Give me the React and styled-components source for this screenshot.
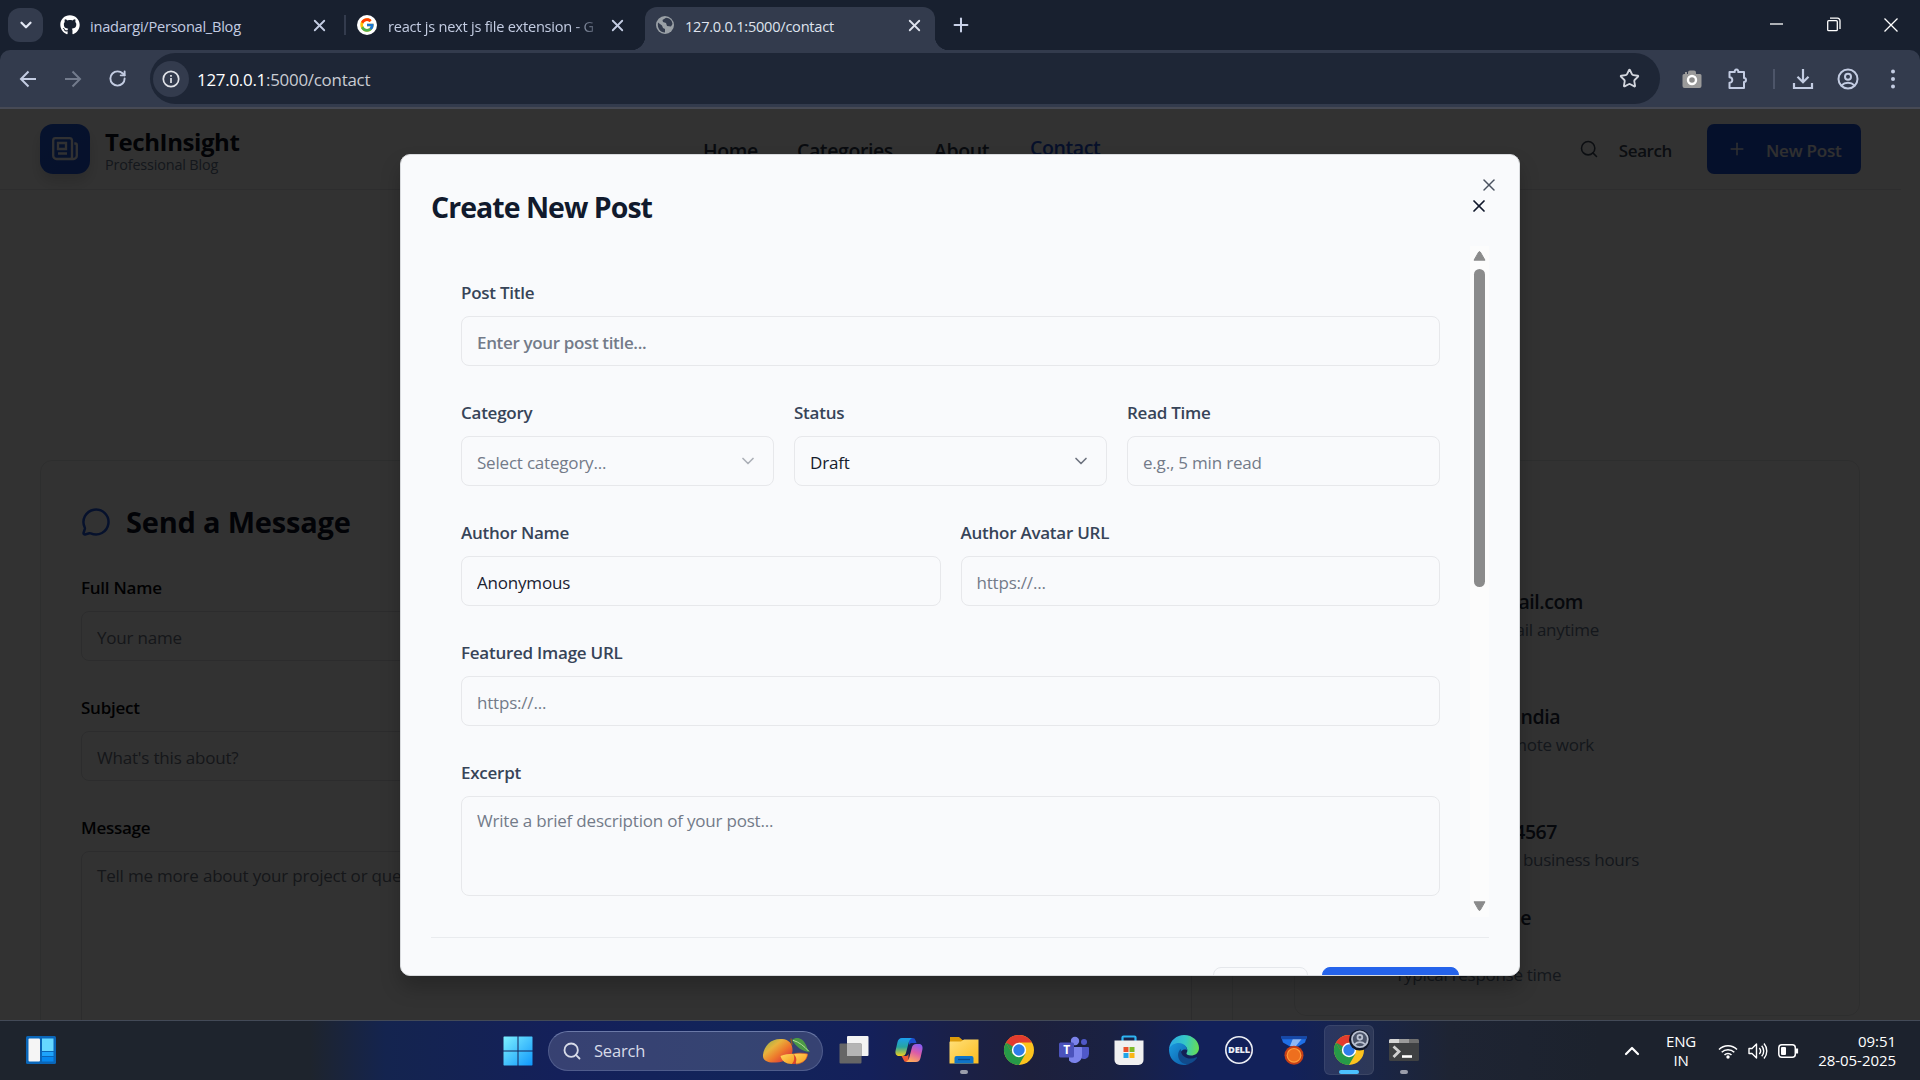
import React from "react";
import styled, { createGlobalStyle, css } from "styled-components";
import { X, Plus, Search, ChevronDown, ChevronUp, MessageCircle, RotateCw, Star } from "lucide-react";
import { FaGithub } from "react-icons/fa";
import { FcGoogle } from "react-icons/fc";

const Global = createGlobalStyle`
  * { box-sizing: border-box; }
  body { margin: 0; overflow: hidden; background: #323232; }
  svg { display: block; flex: none; }
  input, textarea, button { font: inherit; letter-spacing: inherit; margin: 0; }
`;

const Screen = styled.div`
  width: 1920px;
  height: 1080px;
  display: flex;
  flex-direction: column;
  overflow: hidden;
  font-family: "Open Sans", "Noto Sans", sans-serif;
  font-stretch: 91%;
  letter-spacing: -0.2px;
  white-space: nowrap;
`;

/* ---------- browser chrome ---------- */

const TabStrip = styled.div`
  height: 50px;
  flex: none;
  display: flex;
  align-items: center;
  background: #18202f;
  padding-left: 8px;
`;

const TabSearch = styled.div`
  width: 35px;
  height: 34px;
  border-radius: 12px;
  background: #333b4d;
  display: flex;
  align-items: center;
  justify-content: center;
  color: #e3e8f4;
`;

const Tab = styled.div`
  position: relative;
  width: ${(p) => p.$w}px;
  height: ${(p) => (p.$active ? 43 : 34)}px;
  align-self: ${(p) => (p.$active ? "flex-end" : "center")};
  padding: 0 ${(p) => p.$right}px ${(p) => (p.$active ? 7 : 0)}px ${(p) => p.$left}px;
  display: flex;
  align-items: center;
  color: #c3cce2;
  ${(p) =>
    p.$active &&
    css`
      color: #dfe3ee;
      background: #333b4d;
      border-radius: 12px 12px 0 0;
      &::before,
      &::after {
        content: "";
        position: absolute;
        bottom: 0;
        width: 14px;
        height: 14px;
      }
      &::before {
        left: -14px;
        background: radial-gradient(circle at 0 0, transparent 14px, #333b4d 14.5px);
      }
      &::after {
        right: -14px;
        background: radial-gradient(circle at 100% 0, transparent 14px, #333b4d 14.5px);
      }
    `}
`;

const TabTitle = styled.span`
  flex: 1;
  min-width: 0;
  overflow: hidden;
  margin-left: ${(p) => p.$gap || 11}px;
  padding-top: 1px;
  font-size: 14.6px;
  line-height: 24px;
  letter-spacing: -0.25px;
  ${(p) => p.$fade && "mask-image: linear-gradient(90deg, #000 84%, transparent 98%);"}
`;

const TabRule = styled.div`
  width: 2px;
  height: 20px;
  background: #333b4d;
`;

const NewTab = styled.div`
  margin-left: 15px;
  color: #c9d2e8;
`;

const WindowButtons = styled.div`
  margin-left: auto;
  padding-right: 22px;
  display: flex;
  align-items: center;
  gap: 43px;
`;

const Toolbar = styled.div`
  height: 59px;
  flex: none;
  display: flex;
  align-items: center;
  background: #333b4d;
  border-bottom: 2px solid #474a55;
  border-radius: 10px 10px 0 0;
  color: #c3cce2;
`;

const ToolbarWrap = styled.div`
  flex: none;
  background: #18202f;
`;

const NavIcons = styled.div`
  width: 150px;
  flex: none;
  display: flex;
  align-items: center;
  gap: 25px;
  padding-left: 18px;
`;

const Omnibox = styled.div`
  width: 1510px;
  flex: none;
  height: 51px;
  border-radius: 26px;
  background: #1e2636;
  display: flex;
  align-items: center;
  padding: 0 20px 0 7px;
  color: #d3d6de;
`;

const InfoBadge = styled.div`
  width: 36px;
  height: 36px;
  margin-left: -4px;
  border-radius: 50%;
  background: #333b4d;
  display: flex;
  align-items: center;
  justify-content: center;
`;

const Address = styled.span`
  flex: 1;
  margin-left: 8px;
  padding-top: 1px;
  font-size: 16.9px;
  color: #c9ccd3;
  letter-spacing: -0.25px;
  b { font-weight: 400; color: #fff; }
`;

const ToolbarActions = styled.div`
  flex: 1;
  display: flex;
  align-items: center;
  padding-left: 21px;
`;

const ActionSlot = styled.div`
  width: ${(p) => p.$w}px;
  display: flex;
  justify-content: center;
`;

const ToolbarRule = styled.div`
  width: 2px;
  height: 20px;
  background: #4d5569;
`;

/* ---------- page behind the dialog ---------- */

const Page = styled.div`
  position: relative;
  height: 911px;
  flex: none;
  overflow: hidden;
  background: #fafafa;
  color: #0f172a;
`;

const Header = styled.header`
  width: 1901px;
  height: 81px;
  border-bottom: 1px solid #dfe1e5;
  display: flex;
  align-items: center;
  padding: 0 40px;
`;

const Logo = styled.div`
  width: 50px;
  height: 50px;
  border-radius: 13px;
  background: linear-gradient(135deg, #1f5ae0, #2257d8);
  box-shadow: 0 8px 14px rgba(0, 0, 0, 0.14);
  display: flex;
  align-items: center;
  justify-content: center;
  margin-top: -1px;
`;

const Brand = styled.div`
  margin-left: 15px;
  width: 590px;
  padding-top: 5px;
`;

const BrandName = styled.div`
  font-size: 24px;
  font-weight: 700;
  line-height: 26px;
  letter-spacing: -0.4px;
  color: #0b1020;
`;

const BrandTag = styled.div`
  font-size: 14.4px;
  line-height: 19px;
  letter-spacing: -0.15px;
  color: #64748b;
`;

const Nav = styled.nav`
  display: flex;
  flex: 1;
  margin-left: 8px;
  gap: 40px;
  font-size: 19.5px;
  font-weight: 600;
  line-height: 28px;
  letter-spacing: -0.4px;
  color: #2f3a4d;
`;

const NavLink = styled.a`
  width: ${(p) => p.$w}px;
  padding-top: ${(p) => (p.$current ? 0 : 3)}px;
  ${(p) => p.$current && "color: #1e4fd0;"}
`;

const HeaderSearch = styled.div`
  display: flex;
  align-items: center;
  gap: 20px;
  font-size: 17px;
  font-weight: 600;
  letter-spacing: -0.4px;
  margin-right: 35px;
  color: #3b4557;
  span { padding-top: 2px; }
`;

const NewPost = styled.div`
  width: 154px;
  height: 50px;
  margin-top: -1px;
  border-radius: 7px;
  background: #1d4fd7;
  color: #f1f1f1;
  display: flex;
  align-items: center;
  padding-left: 20px;
  gap: 19px;
  font-size: 17px;
  font-weight: 600;
  span { padding-top: 3px; }
`;

const Columns = styled.div`
  display: flex;
  align-items: flex-start;
  gap: 61px;
  padding: 270px 0 0 40px;
`;

const Card = styled.section`
  width: ${(p) => p.$w}px;
  height: ${(p) => p.$h}px;
  border: 1px solid #e2e3e6;
  border-radius: 12px;
  padding: ${(p) => p.$pad};
`;

const CardTitle = styled.h2`
  margin: 0 0 29px;
  display: flex;
  align-items: center;
  gap: 15px;
  font-size: 29px;
  line-height: 40px;
  font-weight: 700;
  letter-spacing: -0.2px;
  color: #0b1224;
  svg { color: #2157dc; }
`;

const Field = styled.div`
  display: flex;
  flex-direction: column;
  margin-bottom: ${(p) => (p.$dim ? 30 : 0)}px;
`;

const Label = styled.label`
  height: 40px;
  line-height: 33px;
  font-size: 17px;
  font-weight: 600;
  letter-spacing: -0.25px;
  color: ${(p) => (p.$dim ? "#05070c" : "#374458")};
`;

const boxed = css`
  border: 1.5px solid ${(p) => (p.$dim ? "#dadce0" : "#e7e8eb")};
  border-radius: 8px;
  padding: 0 15px;
  font-size: 17px;
  background: transparent;
  outline: none;
  resize: none;
  color: #1b2232;
  &::placeholder { color: ${(p) => (p.$dim ? "#6b7280" : "#737b89")}; opacity: 1; }
`;

const Input = styled.input`
  ${boxed}
  width: 100%;
  height: 50px;
  padding-top: 3px;
  font-weight: ${(p) => (p.$medium ? 600 : 400)};
  letter-spacing: ${(p) => (p.$medium ? -0.35 : -0.2)}px;
`;

const TextArea = styled.textarea`
  ${boxed}
  width: 100%;
  height: ${(p) => p.$h}px;
  padding-top: 11px;
  line-height: 25px;
`;

const Contact = styled.div`
  width: ${(p) => p.$w}px;
  margin-bottom: ${(p) => p.$gap}px;
  text-align: ${(p) => (p.$left ? "left" : "right")};
`;

const ContactMain = styled.div`
  font-size: 19.5px;
  line-height: 28px;
  font-weight: 600;
  letter-spacing: -0.45px;
  color: #222b3d;
  margin-right: ${(p) => p.$inset}px;
`;

const ContactSub = styled.div`
  font-size: 17px;
  line-height: 28px;
  letter-spacing: -0.28px;
  color: #64748b;
`;

const Overlay = styled.div`
  position: absolute;
  inset: 0;
  background: rgba(0, 0, 0, 0.8);
  display: flex;
  justify-content: center;
  align-items: flex-start;
  padding-top: 45px;
`;

/* ---------- dialog ---------- */

const Dialog = styled.div`
  position: relative;
  width: 1120px;
  height: 822px;
  overflow: hidden;
  border: 1px solid #d9dbde;
  border-radius: 10px;
  background: #f9fafc;
  box-shadow: 0 12px 20px rgba(0, 0, 0, 0.22);
  padding: 30px;
`;

const DialogTitle = styled.h2`
  margin: 0;
  height: 61px;
  font-size: 28.5px;
  line-height: 45px;
  font-weight: 700;
  color: #111a2d;
  letter-spacing: -0.98px;
  display: flex;
  justify-content: space-between;
  svg { margin-top: 11px; color: #10182b; }
`;

const DialogClose = styled.div`
  position: absolute;
  top: 20px;
  right: 20px;
  color: #4b5360;
`;

const ScrollArea = styled.div`
  display: flex;
  height: 671px;
`;

const Form = styled.div`
  flex: 1;
  padding: 30px 30px 0;
  display: flex;
  flex-direction: column;
  gap: 30px;
`;

const Row = styled.div`
  display: grid;
  grid-template-columns: repeat(${(p) => p.$n}, 1fr);
  gap: 20px;
`;

const SelectBox = styled.div`
  ${boxed}
  height: 50px;
  padding: 3px 15px 0 15px;
  display: flex;
  align-items: center;
  justify-content: space-between;
  color: ${(p) => (p.$empty ? "#737b89" : "#161d2d")};
  svg { color: #6d737f; margin-top: -3px; opacity: ${(p) => (p.$empty ? 0.55 : 1)}; }
`;

const ScrollTrack = styled.div`
  width: 19px;
  background: #fcfcfc;
  display: flex;
  flex-direction: column;
  align-items: center;
  padding: 5px 0 6px;
`;

const ScrollThumb = styled.div`
  width: 11px;
  height: 318px;
  margin: 8px 0 auto;
  border-radius: 6px;
  background: #8b8b8b;
`;

const DialogFooter = styled.div`
  margin-top: 20px;
  border-top: 1.5px solid #e9ebee;
  padding: 29px 30px 0 0;
  display: flex;
  justify-content: flex-end;
  gap: 14px;
`;

const FooterButton = styled.div`
  width: ${(p) => p.$w}px;
  height: 50px;
  border-radius: 8px;
  border: 1.5px solid ${(p) => (p.$primary ? "#2563eb" : "#e5e7eb")};
  background: ${(p) => (p.$primary ? "#2563eb" : "transparent")};
`;

/* ---------- taskbar ---------- */

const Taskbar = styled.footer`
  flex: 1;
  border-top: 1px solid #434a57;
  display: flex;
  align-items: center;
  background: linear-gradient(90deg, #1e242d 0, #1e242d 310px, #14244f 385px, #14205a 560px, #12245a 740px, #14205a 870px, #1b2045 970px, #1d203c 1030px, #1a2142 1110px, #12215a 1200px, #12215a 1290px, #192548 1370px, #1e2433 1450px, #1c222d 1600px, #1c222d 100%);
  color: #fff;
`;

const StartZone = styled.div`
  width: 503px;
  padding: 0 0 1px 26px;
`;

const SearchPill = styled.div`
  width: 275px;
  height: 40px;
  margin-left: 15px;
  margin-right: 3px;
  border-radius: 20px;
  border: 1px solid rgba(150, 165, 210, 0.28);
  border-top-color: rgba(160, 175, 220, 0.5);
  background: rgba(255, 255, 255, 0.15);
  display: flex;
  align-items: center;
  padding: 0 12px 0 13px;
  font-size: 16.5px;
  color: #d7dbe8;
  span { flex: 1; margin-left: 12px; }
`;

const AppSlot = styled.div`
  width: 55px;
  height: 59px;
  display: flex;
  flex-direction: column;
  align-items: center;
  padding-top: 4px;
`;

const AppTile = styled.div`
  width: 50px;
  height: 50px;
  border-radius: 6px;
  display: flex;
  flex-direction: column;
  align-items: center;
  padding-top: 10px;
  ${(p) => p.$active && "background: rgba(255,255,255,0.09); border: 1px solid rgba(255,255,255,0.07); padding-top: 9px;"}
`;

const RunMark = styled.div`
  width: ${(p) => (p.$active ? 20 : 8)}px;
  height: 4px;
  margin-top: 5px;
  border-radius: 2px;
  background: ${(p) => (p.$active ? "#4cc2ff" : "#9a9dab")};
`;

const Tray = styled.div`
  flex: 1;
  display: flex;
  align-items: center;
  justify-content: flex-end;
  padding-right: 24px;
  font-size: 15px;
  line-height: 20px;
`;

const Language = styled.div`
  text-align: center;
  width: 40px;
  margin: 0 17px 0 17px;
  line-height: 19px;
`;

const StatusIcons = styled.div`
  display: flex;
  align-items: center;
  gap: 10px;
  margin-right: 19px;
`;

const Clock = styled.div`
  width: 78px;
  display: flex;
  flex-direction: column;
  align-items: flex-end;
  letter-spacing: -0.05px;
  line-height: 19px;
`;

/* ---------- drawings ---------- */

const Arrow = ({ dim, flip }) => (
  <svg width="20" height="20" viewBox="0 0 20 20" fill="none" stroke={dim ? "#737b8c" : "#c3cce2"} strokeWidth="2">
    <g transform={flip ? "translate(20 0) scale(-1 1)" : undefined}>
      <path d="M18 10H3M10.5 2.5 3 10l7.500 7.500" />
    </g>
  </svg>
);

const Globe = () => (
  <svg width="18" height="20" viewBox="0 0 18 18">
    <circle cx="9" cy="9" r="9" fill="#9aa0a6" />
    <path d="M2 6.500 6 9.500 7 12l2 1v3.500C4 16.500 1 12 2 6.500ZM10 1.800 6.500 4 7 6l3 1 1 3 4 .5L16.500 8C16 4 13.500 2 10 1.800Z" fill="#333b4d" />
  </svg>
);

const WinGlyph = ({ kind }) => (
  <svg width="14" height="16" viewBox="0 0 14 16" fill="none" stroke="#fff" strokeWidth="1.3">
    {kind === "min" && <path d="M0 7h13" />}
    {kind === "restore" && (
      <>
        <rect x=".7" y="3.700" width="9.600" height="10" rx="1" />
        <path d="M3 1.200h7.500a2.500 2.500 0 0 1 2.500 2.500V12" />
      </>
    )}
    {kind === "close" && <path d="m.5 1.500 13 13M13.500 1.500l-13 13" />}
  </svg>
);

const Camera = () => (
  <svg width="20" height="20" viewBox="0 0 20 20">
    <path d="M2 5h4V3.500A2 2 0 0 1 8 1.500h4a2 2 0 0 1 2 2V5h4a1.500 1.500 0 0 1 1.500 1.500V17a2 2 0 0 1-2 2H2.500a2 2 0 0 1-2-2V6.500A1.500 1.500 0 0 1 2 5Z" fill="#9a9a9a" />
    <path d="M3 3h2v2H3z" fill="#9a9a9a" />
    <circle cx="10" cy="11" r="4" fill="#8b8b8b" stroke="#fff" strokeWidth="2.400" />
  </svg>
);

const Puzzle = () => (
  <svg width="22" height="22" viewBox="0 0 22 22" fill="none" stroke="#c3cce2" strokeWidth="2">
    <path d="M2.500 4h5.300a1.800 1.800 0 1 1 3.400 0H17v6a2 2 0 1 1 0 4v6H2.500v-5.200a2.800 2.800 0 0 0 0-5.600Z" strokeLinejoin="round" />
  </svg>
);

const Download = () => (
  <svg width="22" height="22" viewBox="0 0 22 22" fill="none" stroke="#c3cce2" strokeWidth="2.200">
    <path d="M11 1v13M5.500 8.700 11 14.200l5.500-5.500M2 15v5h18v-5" />
  </svg>
);

const Profile = () => (
  <svg width="22" height="22" viewBox="0 0 22 22" fill="none" stroke="#c3cce2" strokeWidth="2">
    <circle cx="11" cy="11" r="9.500" />
    <circle cx="11" cy="8.700" r="3" />
    <path d="M4.500 17.500c3.500-3.600 9.500-3.600 13 0" />
  </svg>
);

const Dots = () => (
  <svg width="6" height="20" viewBox="0 0 6 20" fill="#c3cce2">
    <circle cx="3" cy="2.500" r="2" />
    <circle cx="3" cy="10" r="2" />
    <circle cx="3" cy="17.500" r="2" />
  </svg>
);

const Info = () => (
  <svg width="18" height="18" viewBox="0 0 18 18" fill="none" stroke="#e1e3e8" strokeWidth="1.700">
    <circle cx="9" cy="9" r="7.700" />
    <path d="M9 8v5M9 5v1.800" />
  </svg>
);

const PaperLogo = () => (
  <svg width="26" height="24" viewBox="0 0 26 24" fill="none" stroke="#f4f5f8" strokeWidth="2.300">
    <path d="M17.500 1.200H3.500A2.300 2.300 0 0 0 1.200 3.500v15.200A3.300 3.300 0 0 0 4.500 22h17a3.300 3.300 0 0 0 3.300-3.300V8a1.500 1.500 0 0 0-1.500-1.500h-1M20 22a2 2 0 0 1 0-2V3.500A2.500 2.500 0 0 0 17.500 1.200" />
    <path d="M6 6h8v6H6zM6 16.500h9" />
  </svg>
);

const Triangle = ({ down }) => (
  <svg width="13" height="10" viewBox="0 0 13 10">
    <path d={down ? "M1 .8h11L7.300 9q-.8 1-1.600 0Z" : "M1 9.200h11L7.300 1q-.8-1-1.600 0Z"} fill="#8b8b8b" stroke="#8b8b8b" strokeWidth="1" strokeLinejoin="round" />
  </svg>
);

const Widgets = () => (
  <svg width="30" height="28" viewBox="0 0 30 28">
    <rect width="30" height="28" rx="1.500" fill="#0a66b8" />
    <rect x="2.500" y="2.500" width="11.500" height="23" rx="1" fill="#f5f5f5" />
    <rect x="16" y="2.500" width="11.500" height="12.500" fill="#66d8ff" />
    <rect x="16" y="16" width="11.500" height="4" fill="#1ea4fb" />
    <rect x="16" y="21" width="11.500" height="4.500" fill="#0788ee" />
  </svg>
);

const WindowsLogo = () => (
  <svg width="30" height="30" viewBox="0 0 30 30">
    <defs>
      <linearGradient id="win" x1="0" y1="0" x2="1" y2="1">
        <stop stopColor="#7df0ff" />
        <stop offset="1" stopColor="#0f97fb" />
      </linearGradient>
    </defs>
    <path fill="url(#win)" d="M1 .5h13.500V14.500H.5V1ZM15.500.5H29l.5.5v13.500h-14ZM.5 15.500h14v14H1l-.5-.5ZM15.500 15.500h14V29l-.5.5H15.500Z" />
  </svg>
);

const Mango = () => (
  <svg width="48" height="28" viewBox="0 0 48 28">
    <defs>
      <linearGradient id="mango" x1=".1" y1=".1" x2=".9" y2=".9">
        <stop stopColor="#9fb04c" />
        <stop offset=".3" stopColor="#e8b33c" />
        <stop offset=".6" stopColor="#ee7a2c" />
        <stop offset="1" stopColor="#d8303a" />
      </linearGradient>
      <linearGradient id="slice" x1="0" y1="0" x2="1" y2="1">
        <stop stopColor="#ffd95e" />
        <stop offset="1" stopColor="#f79a1e" />
      </linearGradient>
    </defs>
    <path d="M1 18C2 8 10 1 20 2c7 .5 11 5 10.500 12S23 25 14 25.500C6 26 .5 24 1 18Z" fill="url(#mango)" />
    <path d="M29 1.500 30 8" stroke="#8a5a2a" strokeWidth="1.500" />
    <path d="M30 3c5-4 11-1.500 14 5 1 3 2 5 4 7-7 0-14-5-18-12Z" fill="#4c9a46" />
    <path d="M31 3.300C37 5 42 9 46.500 14" stroke="#b7dc9e" fill="none" />
    <path d="M30 17.500c5-2 11-1.500 15.500-.5-.5 6-5 9.500-11.500 10Z" fill="url(#slice)" stroke="#e0602a" strokeWidth=".7" />
    <path d="M18.500 19c4-1.800 8-2 13-2.200 1 5 1 7 0 10C25 27.500 20 25 18.500 19Z" fill="url(#slice)" />
    <path d="M31.500 17c3 3 4 6 1.500 10h-3c2.500-3 2.700-6 1.500-10Z" fill="#dc452c" />
  </svg>
);

const TaskView = () => (
  <svg width="30" height="30" viewBox="0 0 30 30">
    <rect x="8" y="1" width="21.500" height="20" rx="1" fill="#f3f3f3" />
    <rect x=".5" y="8.500" width="22" height="20" rx="1" fill="#666" />
    <rect x="8" y="8.500" width="14.500" height="12.500" fill="#b5b5b5" />
  </svg>
);

const Copilot = () => (
  <svg width="30" height="30" viewBox="0 0 30 30">
    <defs>
      <linearGradient id="cpA" x1="0" y1="0" x2="0" y2="1">
        <stop stopColor="#1c9ff0" />
        <stop offset=".5" stopColor="#27a5a0" />
        <stop offset="1" stopColor="#f3d01c" />
      </linearGradient>
      <linearGradient id="cpB" x1=".7" y1="0" x2=".3" y2="1">
        <stop stopColor="#8a5cf2" />
        <stop offset=".45" stopColor="#dc5ba8" />
        <stop offset="1" stopColor="#ffae5a" />
      </linearGradient>
    </defs>
    <path d="M15 3h3.500a3 3 0 0 1 3 2.300L22.500 8H18c-2 0-2.500 1-3 2.500Z" fill="#1b4fd0" />
    <path d="M8 3h10c-2 1-3 3-3.700 6l-2.200 8.500A4.500 4.500 0 0 1 7.500 21H5c-3 0-4-2.500-3.400-5.500l1.800-8C4 4.500 5.500 3 8 3Z" fill="url(#cpA)" />
    <path d="M7.500 21H12c1.500 0 2-1 2.500-2.500V27h-2a3 3 0 0 1-3-2.200Z" fill="#ee5b35" />
    <path d="M22 27H12c2-1 3-3 3.700-6l2.200-8.500A4.500 4.500 0 0 1 22.500 9H25c3 0 4 2.500 3.400 5.500l-1.800 8C26 25.500 24.500 27 22 27Z" fill="url(#cpB)" />
  </svg>
);

const Folder = () => (
  <svg width="30" height="30" viewBox="0 0 30 30">
    <defs>
      <linearGradient id="fold" x1="0" y1="0" x2="1" y2="1">
        <stop stopColor="#ffe07a" />
        <stop offset="1" stopColor="#fcbc1e" />
      </linearGradient>
    </defs>
    <path d="M1 2h9l3.500 3H28v6H1Z" fill="#dc9b0b" />
    <path d="M1 6.500h11l3-2h14.500V28.500H.5V7Z" fill="url(#fold)" />
    <path d="M5.500 28.500V23a2 2 0 0 1 2-2h15a2 2 0 0 1 2 2v5.500Z" fill="#0f74c8" />
    <path d="M9 24.500h12" stroke="#0b4b8c" strokeWidth="1.300" />
  </svg>
);

const Chrome = ({ badge }) => (
  <svg width="30" height="30" viewBox="0 0 30 30" overflow="visible">
    <circle cx="15" cy="15" r="15" fill="#fcc31e" />
    <path d="M2 7.500A15 15 0 0 0 15 30l6.500-11.200L15 15 8.500 18.700Z" fill="#269a48" />
    <path d="M2 7.500A15 15 0 0 1 28 7.500H15L8.500 18.700Z" fill="#e33b2e" />
    <path d="M2 7.500 8.500 18.700 15 15Z" fill="#269a48" />
    <circle cx="15" cy="15" r="7.200" fill="#fff" />
    <circle cx="15" cy="15" r="5.700" fill="#2f7de9" />
    {badge && (
      <g transform="translate(17 -5)">
        <circle cx="8.500" cy="10" r="10.500" fill="#10172a" />
        <g transform="translate(.2 .5) scale(.79)" fill="#4a5368" stroke="#b9c0d0" strokeWidth="2.300">
          <circle cx="11" cy="11" r="10" />
          <circle cx="11" cy="8.700" r="3" fill="none" />
          <path d="M4.500 17.500c3.500-3.600 9.500-3.600 13 0" fill="none" />
        </g>
      </g>
    )}
  </svg>
);

const Teams = () => (
  <svg width="30" height="30" viewBox="0 0 30 30">
    <circle cx="25" cy="7" r="3" fill="#5059c9" />
    <path d="M21 12h8a1 1 0 0 1 1 1v6a5 5 0 0 1-8 4Z" fill="#5059c9" />
    <circle cx="16" cy="6" r="4.200" fill="#7b83eb" />
    <path d="M10 12h12a1 1 0 0 1 1 1v7.500a7.500 7.500 0 0 1-13 5Z" fill="#7b83eb" />
    <rect y="7.500" width="15" height="15" rx="1.500" fill="#4b53bc" />
    <text x="7.500" y="19" textAnchor="middle" fontSize="12" fontWeight="700" fill="#fff">T</text>
  </svg>
);

const Store = () => (
  <svg width="30" height="30" viewBox="0 0 30 30">
    <path d="M8.500 7V2.500a1 1 0 0 1 1-1h11a1 1 0 0 1 1 1V7" fill="none" stroke="#2eb4f2" strokeWidth="2.200" />
    <path d="M.5 5.500h29V25a5 5 0 0 1-5 5h-19a5 5 0 0 1-5-5Z" fill="#f0f0f0" />
    <path d="M9.500 12h5v5h-5z" fill="#e8502a" />
    <path d="M15.500 12h5v5h-5z" fill="#7db927" />
    <path d="M9.500 18h5v5h-5z" fill="#1fa4e8" />
    <path d="M15.500 18h5v5h-5z" fill="#f9b616" />
  </svg>
);

const Edge = () => (
  <svg width="30" height="30" viewBox="0 0 30 30">
    <defs>
      <linearGradient id="edA" x1="0" y1=".3" x2="1" y2=".4">
        <stop stopColor="#2aa7e8" />
        <stop offset=".55" stopColor="#36c8c4" />
        <stop offset="1" stopColor="#66dd55" />
      </linearGradient>
      <linearGradient id="edB" x1="0" y1="0" x2="1" y2="1">
        <stop stopColor="#1a9be0" />
        <stop offset="1" stopColor="#0c59a4" />
      </linearGradient>
    </defs>
    <path d="M0 14C1 5 8 0 15 0c9 0 15 6.500 15 13 0 5-4 7.500-8 7.500-3 0-5-1-4.500-2.500 1.500-1.500 1.500-6-3-8C9 8 3 10 0 14Z" fill="url(#edA)" />
    <path d="M0 14c2-5 9-7.500 14-5 3 1.500 4 4 4 6-5-2-8 3-6.500 7.500C13 27 17 29 21 28.500 17 30.500 12 30.500 8 28.300 2 25 0 20 0 14Z" fill="url(#edB)" />
    <path d="M12 14c-3 2-4 7-1.500 11 2 3.500 6.500 5.200 11 3.300 3-1.300 5-3.200 6.500-5.300.4-.7-.2-1-.8-.7C20 25.500 11 22 12 14Z" fill="#114a8b" />
  </svg>
);

const Dell = () => (
  <svg width="30" height="30" viewBox="0 0 30 30">
    <circle cx="15" cy="15" r="13.200" fill="none" stroke="#eceef4" strokeWidth="1.600" />
    <text x="15" y="18.400" textAnchor="middle" fontSize="9" fontWeight="800" fill="#eceef4" textLength="22" lengthAdjust="spacingAndGlyphs">DELL</text>
  </svg>
);

const Medal = () => (
  <svg width="30" height="30" viewBox="0 0 30 30">
    <path d="M2 1.500h26l-2 6-7 4h-8l-7-4Z" fill="#1f6fe6" />
    <path d="M14 3.500h9L17 11h-6Z" fill="#8fb9f5" />
    <path d="M2 1.500h26l-.8 2.800H2.900Z" fill="#1648a8" />
    <circle cx="15" cy="20.300" r="9.500" fill="#c73f16" />
    <circle cx="15" cy="20.300" r="7.400" fill="#ff9d3c" />
    <circle cx="15" cy="20.300" r="6.200" fill="#ee6f1e" />
  </svg>
);

const Terminal = () => (
  <svg width="30" height="30" viewBox="0 0 30 30">
    <rect y="4" width="30" height="22" rx="1.500" fill="#3f4143" />
    <path d="M0 8V5.500A1.500 1.500 0 0 1 1.500 4H10v4Z" fill="#d5d5d5" />
    <path d="M10 4h10v4H10z" fill="#9b9b9b" />
    <path d="M20 4h8.500A1.500 1.500 0 0 1 30 5.500V8H20z" fill="#6e6e6e" />
    <path d="m4.500 11.500 5.500 5-5.500 5.500" fill="none" stroke="#d0d0d0" strokeWidth="2.800" />
    <path d="M13 21.500h10" stroke="#fff" strokeWidth="2.600" />
  </svg>
);

const Wifi = () => (
  <svg width="20" height="16" viewBox="0 0 20 16" fill="none" stroke="#fff" strokeWidth="1.500">
    <path d="M1 6.500a12.600 12.600 0 0 1 18 0M3.700 9.300a8.800 8.800 0 0 1 12.600 0M6.500 12a4.900 4.900 0 0 1 7 0" />
    <circle cx="10" cy="14" r="1.700" fill="#fff" stroke="none" />
  </svg>
);

const Speaker = () => (
  <svg width="20" height="18" viewBox="0 0 20 18" fill="none" stroke="#fff" strokeWidth="1.400">
    <path d="M1 6.500h3L8.500 2v14L4 11.500H1Z" strokeLinejoin="round" />
    <path d="M11.300 6a4.500 4.500 0 0 1 0 6M13.700 3.700a8 8 0 0 1 0 10.600M16 1.500a11.500 11.500 0 0 1 0 15" />
  </svg>
);

const Battery = () => (
  <svg width="21" height="14" viewBox="0 0 21 14" fill="none" stroke="#fff" strokeWidth="1.500">
    <rect x=".8" y=".8" width="16.500" height="12.400" rx="3" />
    <rect x="3" y="3" width="5" height="8" rx="1" fill="#fff" stroke="none" />
    <path d="M19 4.500v5" strokeWidth="2.200" />
  </svg>
);

const apps = [
  { Icon: TaskView },
  { Icon: Copilot },
  { Icon: Folder, running: true },
  { Icon: Chrome },
  { Icon: Teams },
  { Icon: Store },
  { Icon: Edge },
  { Icon: Dell },
  { Icon: Medal },
  { Icon: Chrome, active: true },
  { Icon: Terminal, running: true },
];

const FormField = ({ label, children }) => (
  <Field>
    <Label>{label}</Label>
    {children}
  </Field>
);

function BrowserChrome() {
  return (
    <>
      <TabStrip>
        <TabSearch><ChevronDown size={18} strokeWidth={3} /></TabSearch>
        <Tab $w={301} $left={17} $right={15}>
          <FaGithub size={20} color="#fff" />
          <TabTitle $gap={10}>inadargi/Personal_Blog</TabTitle>
          <X size={19} strokeWidth={2.3} />
        </Tab>
        <TabRule />
        <Tab $w={299} $left={11} $right={18}>
          <svg width="20" height="20" viewBox="0 0 20 20">
            <circle cx="10" cy="10" r="10" fill="#fff" />
            <FcGoogle x="2" y="2" size={16} />
          </svg>
          <TabTitle $fade>react js next js file extension - G</TabTitle>
          <X size={19} strokeWidth={2.3} />
        </Tab>
        <Tab $active $w={290} $left={11} $right={11}>
          <Globe />
          <TabTitle>127.0.0.1:5000/contact</TabTitle>
          <X size={19} strokeWidth={2.3} />
        </Tab>
        <NewTab><Plus size={22} strokeWidth={2.2} /></NewTab>
        <WindowButtons>
          <WinGlyph kind="min" />
          <WinGlyph kind="restore" />
          <WinGlyph kind="close" />
        </WindowButtons>
      </TabStrip>
      <ToolbarWrap>
        <Toolbar>
          <NavIcons>
            <Arrow />
            <Arrow dim flip />
            <RotateCw size={19} strokeWidth={2.4} />
          </NavIcons>
          <Omnibox>
            <InfoBadge><Info /></InfoBadge>
            <Address><b>127.0.0.1</b>:5000/contact</Address>
            <Star size={21} strokeWidth={2.1} />
          </Omnibox>
          <ToolbarActions>
            <ActionSlot $w={22}><Camera /></ActionSlot>
            <ActionSlot $w={70}><Puzzle /></ActionSlot>
            <ToolbarRule />
            <ActionSlot $w={56}><Download /></ActionSlot>
            <ActionSlot $w={34}><Profile /></ActionSlot>
            <ActionSlot $w={55}><Dots /></ActionSlot>
          </ToolbarActions>
        </Toolbar>
      </ToolbarWrap>
    </>
  );
}

function ContactPage() {
  return (
    <>
      <Header>
        <Logo><PaperLogo /></Logo>
        <Brand>
          <BrandName>TechInsight</BrandName>
          <BrandTag>Professional Blog</BrandTag>
        </Brand>
        <Nav>
          <NavLink $w={54}>Home</NavLink>
          <NavLink $w={97}>Categories</NavLink>
          <NavLink $w={56}>About</NavLink>
          <NavLink $w={72} $current>Contact</NavLink>
        </Nav>
        <HeaderSearch><Search size={20} strokeWidth={1.9} /><span>Search</span></HeaderSearch>
        <NewPost><Plus size={20} strokeWidth={1.8} /><span>New Post</span></NewPost>
      </Header>
      <Columns>
        <Card $w={1193} $h={700} $pad="41px 40px 0">
          <CardTitle><MessageCircle size={30} strokeWidth={2} />Send a Message</CardTitle>
          <Field $dim><Label $dim>Full Name</Label><Input $dim placeholder="Your name" /></Field>
          <Field $dim><Label $dim>Subject</Label><Input $dim placeholder="What's this about?" /></Field>
          <Field $dim><Label $dim>Message</Label><TextArea $dim $h={190} placeholder="Tell me more about your project or question" /></Field>
        </Card>
        <Card $w={566} $h={556} $pad="127px 0 0 100px">
          <Contact $w={204} $gap={59}><ContactMain $inset={16}>gmail.com</ContactMain><ContactSub>email anytime</ContactSub></Contact>
          <Contact $w={199} $gap={59}><ContactMain $inset={34}>India</ContactMain><ContactSub>remote work</ContactSub></Contact>
          <Contact $w={244} $gap={30}><ContactMain $inset={82}>4567</ContactMain><ContactSub>business hours</ContactSub></Contact>
          <Contact $w={166} $gap={29}><ContactMain $inset={30}>Time</ContactMain></Contact>
          <Contact $w={166} $gap={0} $left><ContactSub>Typical response time</ContactSub></Contact>
        </Card>
      </Columns>
    </>
  );
}

function PostDialog() {
  return (
    <Dialog>
      <DialogClose><X size={20} strokeWidth={1.8} /></DialogClose>
      <DialogTitle>Create New Post<X size={20} strokeWidth={2.1} /></DialogTitle>
      <ScrollArea>
        <Form>
          <FormField label="Post Title"><Input $medium placeholder="Enter your post title..." /></FormField>
          <Row $n={3}>
            <FormField label="Category"><SelectBox $empty>Select category...<ChevronDown size={20} strokeWidth={2} /></SelectBox></FormField>
            <FormField label="Status"><SelectBox>Draft<ChevronDown size={20} strokeWidth={2} /></SelectBox></FormField>
            <FormField label="Read Time"><Input placeholder="e.g., 5 min read" /></FormField>
          </Row>
          <Row $n={2}>
            <FormField label="Author Name"><Input defaultValue="Anonymous" /></FormField>
            <FormField label="Author Avatar URL"><Input placeholder="https://..." /></FormField>
          </Row>
          <FormField label="Featured Image URL"><Input placeholder="https://..." /></FormField>
          <FormField label="Excerpt"><TextArea $h={100} placeholder="Write a brief description of your post..." /></FormField>
        </Form>
        <ScrollTrack>
          <Triangle />
          <ScrollThumb />
          <Triangle down />
        </ScrollTrack>
      </ScrollArea>
      <DialogFooter>
        <FooterButton $w={95} />
        <FooterButton $w={137} $primary />
      </DialogFooter>
    </Dialog>
  );
}

function WindowsTaskbar() {
  return (
    <Taskbar>
      <StartZone><Widgets /></StartZone>
      <WindowsLogo />
      <SearchPill>
        <Search size={20} strokeWidth={2.2} />
        <span>Search</span>
        <Mango />
      </SearchPill>
      {apps.map(({ Icon, active, running }, i) => (
        <AppSlot key={i}>
          <AppTile $active={active}>
            <Icon badge={active} />
            {(active || running) && <RunMark $active={active} />}
          </AppTile>
        </AppSlot>
      ))}
      <Tray>
        <ChevronUp size={24} strokeWidth={2.2} />
        <Language>ENG<br />IN</Language>
        <StatusIcons><Wifi /><Speaker /><Battery /></StatusIcons>
        <Clock><span>09:51</span><span>28-05-2025</span></Clock>
      </Tray>
    </Taskbar>
  );
}

export default function App() {
  return (
    <Screen>
      <Global />
      <BrowserChrome />
      <Page>
        <ContactPage />
        <Overlay><PostDialog /></Overlay>
      </Page>
      <WindowsTaskbar />
    </Screen>
  );
}
